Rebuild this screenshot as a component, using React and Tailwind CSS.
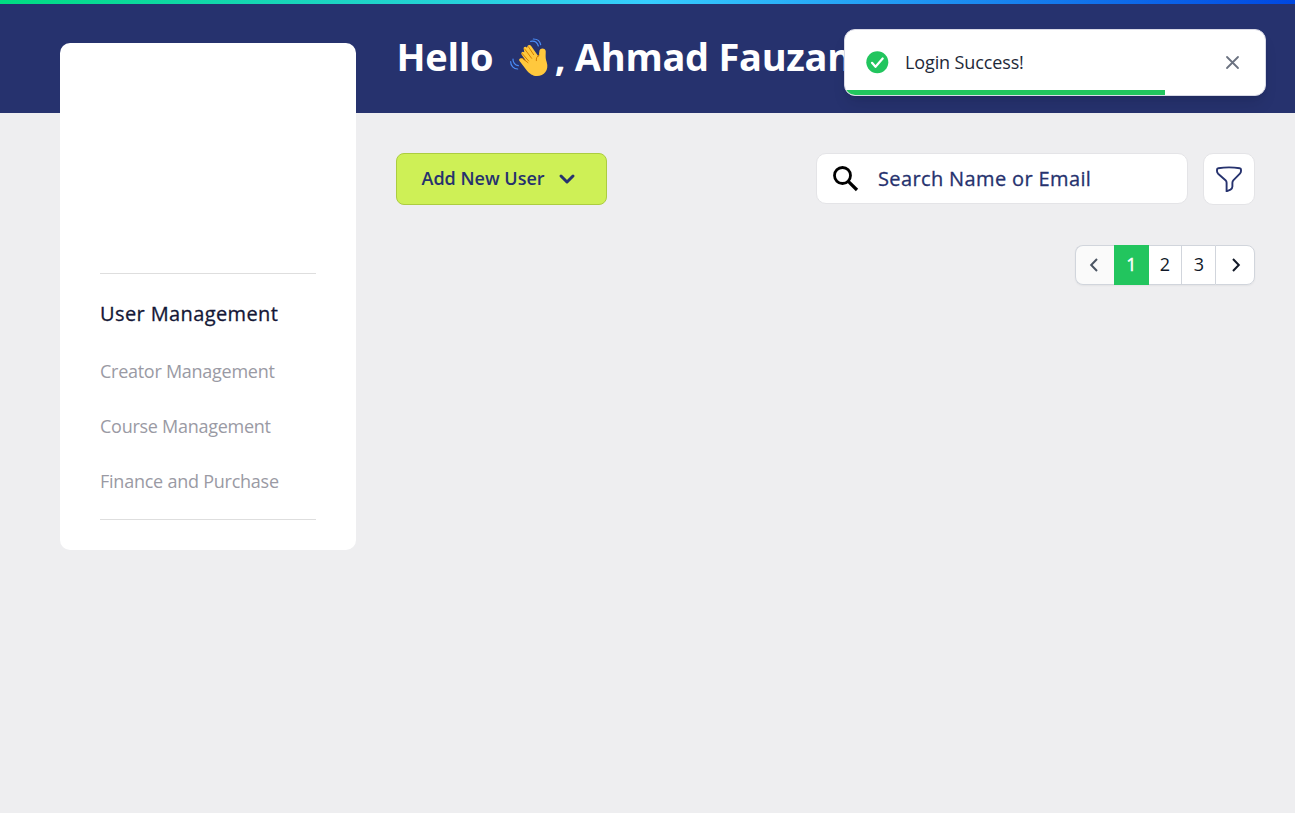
import React from "react";

function WavingHand() {
  return (
    <svg viewBox="354 110 126 126" className="h-[42px] w-[42px] shrink-0" fill="none">
      <path
        d="M388 184c-2-4 2-9 7-7l14 9-14-20c-4-6 3-12 8-7l-2-10c-1-7 6-9 10-4l1-3c2-6 9-6 12-1l22 31 2-15c0-12 16-13 19-3 1 8-2 20 3 34 8 24-8 42-29 42-13 0-23-8-30-16z"
        fill="#ffc83d"
      />
      <path
        d="M397 177l17 13M396 162l20 23M404 149l21 28M415 142l16 24M448 167c-7 4-10 9-9 17"
        stroke="#d67d00"
        strokeWidth="3"
        strokeLinecap="round"
      />
      <path
        d="M430 119c11 0 20 6 22 17M422 126c11-2 20 4 23 14M369 179c-1 9 6 19 16 20M362 187c0 12 9 22 21 22"
        stroke="#4a8df8"
        strokeWidth="3.6"
        strokeLinecap="round"
      />
    </svg>
  );
}

function Toast() {
  return (
    <div
      role="status"
      className="absolute left-[844px] top-[29px] flex h-[67px] w-[422px] items-center overflow-hidden rounded-[11px] border border-[#d9dae6] bg-white pb-px pl-[20px] pr-[24px] shadow-lg"
    >
      <svg viewBox="0 0 24 24" className="size-6 shrink-0" fill="none">
        <circle cx="12.300" cy="12.300" r="11" fill="#22c55e" />
        <path d="M7 12.800l3.500 4 7.200-8.300" stroke="white" strokeWidth="2.200" strokeLinecap="round" strokeLinejoin="round" />
      </svg>
      <p className="ml-[16px] flex-1 text-[18px] leading-7 tracking-[-0.12px] text-gray-800">Login Success!</p>
      <svg viewBox="0 0 16 16" className="size-4 shrink-0" stroke="#6b7280" strokeWidth="1.800" fill="none" strokeLinecap="round">
        <path d="M2 3l11 11M13 3L2 14" />
      </svg>
      <span className="absolute bottom-0 left-0 h-[5px] w-[320px] bg-[#22c55e]" />
    </div>
  );
}

function Sidebar() {
  return (
    <aside className="relative mt-[-70px] flex h-[507px] w-[296px] shrink-0 flex-col rounded-[10px] bg-white px-10 pt-[230px]">
      <nav className="flex h-[247px] flex-col border-y border-[#dedede] pt-[23px]">
        <a className="whitespace-nowrap text-[20px] leading-[34px] tracking-[0.39px] text-[#141736] [-webkit-text-stroke:0.3px_#141736]">User Management</a>
        <a className="mt-[25px] whitespace-nowrap text-[18px] leading-[30px] tracking-[-0.27px] text-[#9a9aa4]">Creator Management</a>
        <a className="mt-[25px] whitespace-nowrap text-[18px] leading-[30px] tracking-[-0.27px] text-[#9a9aa4]">Course Management</a>
        <a className="mt-[25px] whitespace-nowrap text-[18px] leading-[30px] tracking-[-0.24px] text-[#9a9aa4]">Finance and Purchase</a>
      </nav>
    </aside>
  );
}

function Toolbar() {
  return (
    <div className="flex h-[52px] items-start">
      <button className="flex h-[52px] w-[211px] items-center rounded-[8px] border border-[#accd40] bg-[#cef056] pl-6 text-[18px] font-semibold leading-7 text-[#26326e]">
        <span className="pb-0.5 pl-[0.5px]">Add New User</span>
        <svg viewBox="0 0 18 12" className="ml-[13.5px] h-3 w-[18px]" fill="none" stroke="#26326e" strokeWidth="3" strokeLinecap="round" strokeLinejoin="round">
          <path d="M3 3l6 6 6-6" />
        </svg>
      </button>
      <label className="ml-auto flex h-[51px] w-[372px] items-center rounded-[10px] border border-[#e4e4e7] bg-white pl-4">
        <svg viewBox="0 0 26 26" className="size-[26px]" fill="none" stroke="black" strokeWidth="2.800">
          <circle cx="9.500" cy="9.500" r="8" />
          <path d="M15.300 15.300L24 24" strokeWidth="3.200" />
        </svg>
        <span className="ml-[19px] text-[20px] leading-7 tracking-[0.37px] text-[#26326e] [-webkit-text-stroke:0.3px_#26326e]">Search Name or Email</span>
      </label>
      <button className="ml-[15px] flex size-[52px] items-center justify-center rounded-[10px] border border-[#e4e4e7] bg-white">
        <svg viewBox="0 0 26 26" className="size-[26px]" fill="none" stroke="#26326e" strokeWidth="1.900" strokeLinecap="round" strokeLinejoin="round">
          <path d="M13 1.400c3.700 0 7.300.3 10.800.9.700.1 1.200.7 1.200 1.400v1.400c0 1-.4 1.900-1.100 2.600l-6.400 6.500c-.7.700-1.100 1.600-1.100 2.600v3.800c0 1.300-.8 2.400-1.900 3l-3.900 1.700v-8.500c0-1-.4-1.900-1.100-2.600L2.100 7.700C1.400 7 1 6.100 1 5.100V3.700c0-.7.500-1.300 1.200-1.400A66 66 0 0 1 13 1.400z" />
        </svg>
      </button>
    </div>
  );
}

function Pagination() {
  const cell = "flex items-center justify-center border-gray-300 text-[18px] text-gray-900 bg-white border-y";
  return (
    <div className="ml-auto mt-10 flex h-[40px] w-[180px] rounded-[8px] shadow-xs">
      <button className="flex w-[39px] items-center justify-center rounded-l-[8px] border-y border-l border-gray-300 bg-[#fafafa] pr-[3px]">
        <svg viewBox="0 0 10 16" className="h-4 w-2.5" fill="none" stroke="#4b5563" strokeWidth="2">
          <path d="M8 2L2.200 8 8 14" />
        </svg>
      </button>
      <button className="flex w-[35px] items-center justify-center bg-[#22c55e] pb-0.5 text-[18px] text-white [-webkit-text-stroke:0.4px_white]">1</button>
      <button className={`${cell} w-[32px] pb-0.5`}>2</button>
      <button className={`${cell} w-[34px] border-l pb-0.5 pl-px`}>3</button>
      <button className={`${cell} flex-1 rounded-r-[8px] border-x`}>
        <svg viewBox="0 0 10 16" className="ml-0.5 h-4 w-2.5" fill="none" stroke="#111827" strokeWidth="2">
          <path d="M2 2l5.800 6L2 14" />
        </svg>
      </button>
    </div>
  );
}

export default function App() {
  return (
    <div className="relative h-[813px] w-[1295px] overflow-hidden bg-[#eeeef0] font-['Open_Sans',sans-serif]">
      <div className="h-1 bg-[linear-gradient(90deg,#00dc82_0%,#36cdff_50%,#0047e1_100%)]" />
      <header className="flex h-[109px] bg-[#26326e] pl-[396px]">
        <h1 className="flex h-[106px] items-center whitespace-nowrap text-[38px] font-bold tracking-[-0.3px] text-white">
          <span className="pb-0.5 pl-[0.5px]">Hello</span>
          <span className="ml-[15px] mr-[4.5px]"><WavingHand /></span>
          <span className="pb-0.5">, Ahmad Fauzan</span>
        </h1>
      </header>
      <div className="flex pl-[60px] pr-10">
        <Sidebar />
        <main className="ml-10 flex flex-1 flex-col pt-10">
          <Toolbar />
          <Pagination />
        </main>
      </div>
      <Toast />
    </div>
  );
}
